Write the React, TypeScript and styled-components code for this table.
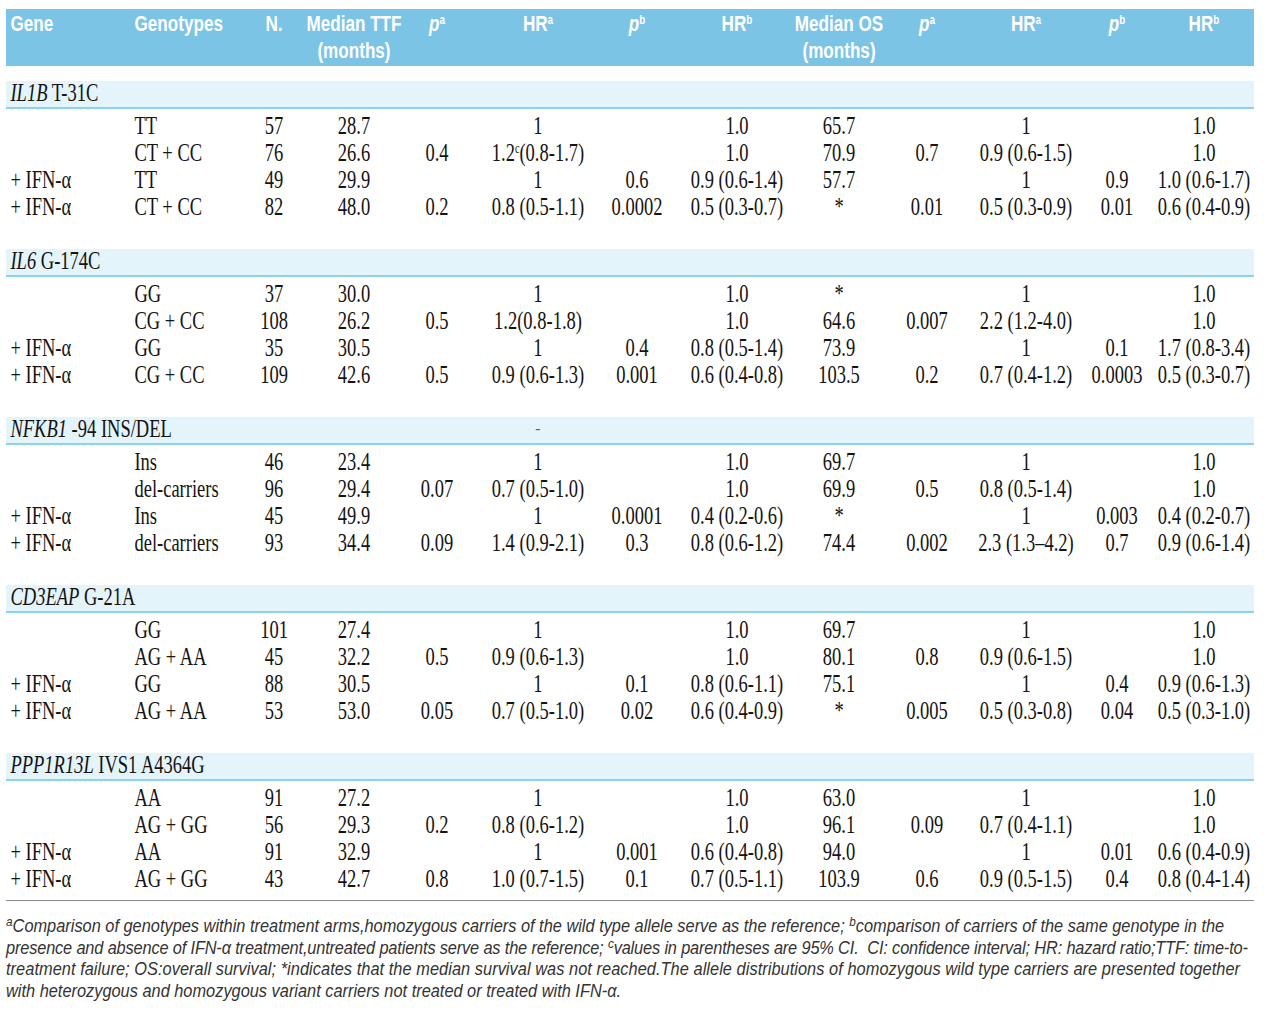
import type { ReactNode } from "react";
import styled, { createGlobalStyle } from "styled-components";

const COLS = "124px 114px 60px 100px 66px 136px 62px 138px 66px 110px 88px 94px 80px 10px";

const GlobalStyle = createGlobalStyle`
  body {
    margin: 0;
    background: #ffffff;
  }
`;

const Page = styled("div")`
  width: 1248px;
  padding: 9px 24px 0 6px;
`;

const Head = styled("div")`
  display: grid;
  grid-template-columns: ${COLS};
  background: #7cc4e5;
  height: 57px;
  padding-top: 1px;
  box-sizing: border-box;
`;

const HeadCell = styled("div")<{ $left?: boolean }>`
  display: flex;
  flex-direction: column;
  align-items: ${(p) => (p.$left ? "flex-start" : "center")};
  padding-left: ${(p) => (p.$left ? "6px" : "0")};
  white-space: nowrap;
  font-family: "Liberation Sans", Arial, sans-serif;
  font-weight: 700;
  font-size: 22.5px;
  line-height: 27px;
  color: #ffffff;
  transform: scaleX(0.76);
  transform-origin: ${(p) => (p.$left ? "left" : "center")} center;
`;

const Sup = styled("sup")`
  font-size: 0.58em;
  font-style: normal;
  vertical-align: 0.55em;
  line-height: 0;
`;

const CellSup = styled("sup")`
  font-size: 0.55em;
  vertical-align: 0.55em;
  line-height: 0;
`;

const P = styled("i")`
  font-style: italic;
`;

const Section = styled("div")`
  margin-top: 15px;
  & + & {
    margin-top: 29px;
  }
`;

const Band = styled("div")`
  display: grid;
  grid-template-columns: ${COLS};
  height: 28px;
  box-sizing: border-box;
  background: #e4f4fb;
  border-bottom: 2px solid #8dd1ec;
  margin-bottom: 3px;
`;

const BandLabel = styled("div")`
  grid-column: 1 / span 5;
  padding-left: 6px;
  white-space: nowrap;
  font-family: "Liberation Serif", "Times New Roman", serif;
  font-size: 25px;
  line-height: 23px;
  color: #151313;
  transform: scaleX(0.74);
  transform-origin: left center;
  & i {
    font-style: italic;
  }
`;

const BandMark = styled("div")`
  display: flex;
  justify-content: center;
  font-family: "Liberation Serif", serif;
  font-size: 16px;
  line-height: 24px;
  color: #666;
`;

const Row = styled("div")`
  display: grid;
  grid-template-columns: ${COLS};
  height: 27px;
  align-items: center;
`;

const Cell = styled("div")<{ $left?: boolean }>`
  display: flex;
  justify-content: ${(p) => (p.$left ? "flex-start" : "center")};
  padding-left: ${(p) => (p.$left ? "6px" : "0")};
  white-space: nowrap;
  font-family: "Liberation Serif", "Times New Roman", serif;
  font-size: 25px;
  line-height: 27px;
  color: #151313;
  transform: scaleX(0.74);
  transform-origin: ${(p) => (p.$left ? "left" : "center")} center;
`;

const Rule = styled("div")`
  margin-top: 8px;
  height: 1px;
  background: #8a8a8a;
`;

const Notes = styled("div")`
  padding-top: 15px;
  font-family: "Liberation Sans", Arial, sans-serif;
  font-style: italic;
  font-size: 17.5px;
  line-height: 21.5px;
  color: #333333;
  transform: scaleX(0.935);
  transform-origin: left top;
`;

const NoteLine = styled("div")<{ $spacing?: number }>`
  white-space: nowrap;
  letter-spacing: ${(p) => p.$spacing ?? 0}px;
`;

const NoteSup = styled("sup")`
  font-size: 0.72em;
  vertical-align: 0.45em;
  line-height: 0;
`;

type Section = {
  gene: string;
  variant: string;
  mark?: string;
  rows: ReactNode[][];
};

const IFN = "+ IFN-α";

const SECTIONS: Section[] = [
  {
    gene: "IL1B",
    variant: "T-31C",
    rows: [
      ["", "TT", "57", "28.7", "", "1", "", "1.0", "65.7", "", "1", "", "1.0"],
      ["", "CT + CC", "76", "26.6", "0.4", <>1.2<CellSup>c</CellSup>(0.8-1.7)</>, "", "1.0", "70.9", "0.7", "0.9 (0.6-1.5)", "", "1.0"],
      [IFN, "TT", "49", "29.9", "", "1", "0.6", "0.9 (0.6-1.4)", "57.7", "", "1", "0.9", "1.0 (0.6-1.7)"],
      [IFN, "CT + CC", "82", "48.0", "0.2", "0.8 (0.5-1.1)", "0.0002", "0.5 (0.3-0.7)", "*", "0.01", "0.5 (0.3-0.9)", "0.01", "0.6 (0.4-0.9)"],
    ],
  },
  {
    gene: "IL6",
    variant: "G-174C",
    rows: [
      ["", "GG", "37", "30.0", "", "1", "", "1.0", "*", "", "1", "", "1.0"],
      ["", "CG + CC", "108", "26.2", "0.5", "1.2(0.8-1.8)", "", "1.0", "64.6", "0.007", "2.2 (1.2-4.0)", "", "1.0"],
      [IFN, "GG", "35", "30.5", "", "1", "0.4", "0.8 (0.5-1.4)", "73.9", "", "1", "0.1", "1.7 (0.8-3.4)"],
      [IFN, "CG + CC", "109", "42.6", "0.5", "0.9 (0.6-1.3)", "0.001", "0.6 (0.4-0.8)", "103.5", "0.2", "0.7 (0.4-1.2)", "0.0003", "0.5 (0.3-0.7)"],
    ],
  },
  {
    gene: "NFKB1",
    variant: "-94 INS/DEL",
    mark: "-",
    rows: [
      ["", "Ins", "46", "23.4", "", "1", "", "1.0", "69.7", "", "1", "", "1.0"],
      ["", "del-carriers", "96", "29.4", "0.07", "0.7 (0.5-1.0)", "", "1.0", "69.9", "0.5", "0.8 (0.5-1.4)", "", "1.0"],
      [IFN, "Ins", "45", "49.9", "", "1", "0.0001", "0.4 (0.2-0.6)", "*", "", "1", "0.003", "0.4 (0.2-0.7)"],
      [IFN, "del-carriers", "93", "34.4", "0.09", "1.4 (0.9-2.1)", "0.3", "0.8 (0.6-1.2)", "74.4", "0.002", "2.3 (1.3–4.2)", "0.7", "0.9 (0.6-1.4)"],
    ],
  },
  {
    gene: "CD3EAP",
    variant: "G-21A",
    rows: [
      ["", "GG", "101", "27.4", "", "1", "", "1.0", "69.7", "", "1", "", "1.0"],
      ["", "AG + AA", "45", "32.2", "0.5", "0.9 (0.6-1.3)", "", "1.0", "80.1", "0.8", "0.9 (0.6-1.5)", "", "1.0"],
      [IFN, "GG", "88", "30.5", "", "1", "0.1", "0.8 (0.6-1.1)", "75.1", "", "1", "0.4", "0.9 (0.6-1.3)"],
      [IFN, "AG + AA", "53", "53.0", "0.05", "0.7 (0.5-1.0)", "0.02", "0.6 (0.4-0.9)", "*", "0.005", "0.5 (0.3-0.8)", "0.04", "0.5 (0.3-1.0)"],
    ],
  },
  {
    gene: "PPP1R13L",
    variant: "IVS1 A4364G",
    rows: [
      ["", "AA", "91", "27.2", "", "1", "", "1.0", "63.0", "", "1", "", "1.0"],
      ["", "AG + GG", "56", "29.3", "0.2", "0.8 (0.6-1.2)", "", "1.0", "96.1", "0.09", "0.7 (0.4-1.1)", "", "1.0"],
      [IFN, "AA", "91", "32.9", "", "1", "0.001", "0.6 (0.4-0.8)", "94.0", "", "1", "0.01", "0.6 (0.4-0.9)"],
      [IFN, "AG + GG", "43", "42.7", "0.8", "1.0 (0.7-1.5)", "0.1", "0.7 (0.5-1.1)", "103.9", "0.6", "0.9 (0.5-1.5)", "0.4", "0.8 (0.4-1.4)"],
    ],
  },
];

function App() {
  return (
    <Page>
      <GlobalStyle />
      <Head>
        <HeadCell $left>Gene</HeadCell>
        <HeadCell $left>Genotypes</HeadCell>
        <HeadCell>N.</HeadCell>
        <HeadCell>
          <span>Median TTF</span>
          <span>(months)</span>
        </HeadCell>
        <HeadCell>
          <span><P>p</P><Sup>a</Sup></span>
        </HeadCell>
        <HeadCell>
          <span>HR<Sup>a</Sup></span>
        </HeadCell>
        <HeadCell>
          <span><P>p</P><Sup>b</Sup></span>
        </HeadCell>
        <HeadCell>
          <span>HR<Sup>b</Sup></span>
        </HeadCell>
        <HeadCell>
          <span>Median OS</span>
          <span>(months)</span>
        </HeadCell>
        <HeadCell>
          <span><P>p</P><Sup>a</Sup></span>
        </HeadCell>
        <HeadCell>
          <span>HR<Sup>a</Sup></span>
        </HeadCell>
        <HeadCell>
          <span><P>p</P><Sup>b</Sup></span>
        </HeadCell>
        <HeadCell>
          <span>HR<Sup>b</Sup></span>
        </HeadCell>
      </Head>

      {SECTIONS.map((section) => (
        <Section key={section.gene}>
          <Band>
            <BandLabel>
              <i>{section.gene}</i> {section.variant}
            </BandLabel>
            <BandMark>{section.mark}</BandMark>
          </Band>
          {section.rows.map((row, i) => (
            <Row key={i}>
              {row.map((value, j) => (
                <Cell key={j} $left={j < 2}>
                  <span>{value}</span>
                </Cell>
              ))}
            </Row>
          ))}
        </Section>
      ))}

      <Rule />
      <Notes>
        <NoteLine $spacing={0}>
          <NoteSup>a</NoteSup>Comparison of genotypes within treatment arms,homozygous carriers of the wild type allele serve as the reference; <NoteSup>b</NoteSup>comparison of carriers of the same genotype in the
        </NoteLine>
        <NoteLine $spacing={-0.17}>
          presence and absence of IFN-α treatment,untreated patients serve as the reference; <NoteSup>c</NoteSup>values in parentheses are 95% CI.&nbsp; CI: confidence interval; HR: hazard ratio;TTF: time-to-
        </NoteLine>
        <NoteLine $spacing={0.05}>
          treatment failure; OS:overall survival; *indicates that the median survival was not reached.The allele distributions of homozygous wild type carriers are presented together
        </NoteLine>
        <NoteLine>with heterozygous and homozygous variant carriers not treated or treated with IFN-α.</NoteLine>
      </Notes>
    </Page>
  );
}

export default App;
